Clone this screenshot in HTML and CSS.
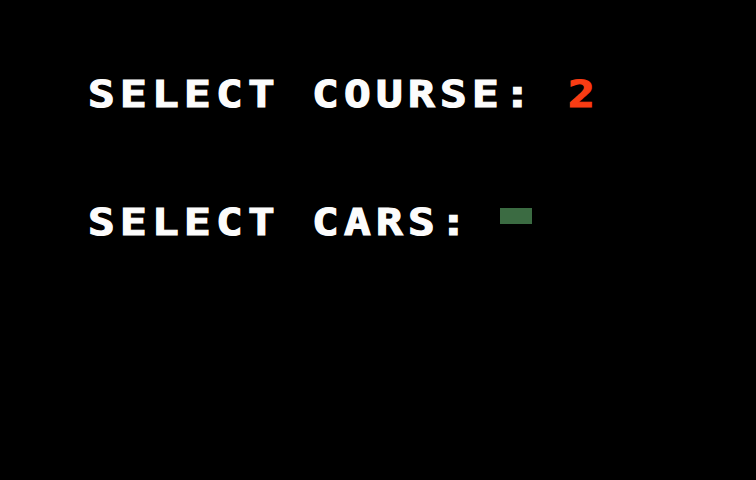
FILE: index.html
```html
<!DOCTYPE html>
<html lang="en">
<head>
    <meta charset="UTF-8">
    <meta name="viewport" content="width=device-width, initial-scale=1.0">
    <title>Select Course</title>
    <link rel="stylesheet" href="styles.css">
</head>
<body>
    <div class="menu">
        <div class="row">
            <span class="label">SELECT COURSE: <span class="value">2</span></span>
        </div>
        <div class="row">
            <span class="label">SELECT CARS:</span>
            <span class="car-box"></span>
        </div>
    </div>
</body>
</html>
```

FILE: styles.css
```css
body {
    margin: 0;
    background-color: #000;
    color: #fcfcfc;
    font-family: "DejaVu Sans Mono", monospace;
    font-weight: bold;
}

.menu {
    width: 756px;
    height: 480px;
    padding: 76px 0 0 88px;
    box-sizing: border-box;
    display: flex;
    flex-direction: column;
    gap: 91px;
}

.row {
    display: flex;
    align-items: flex-start;
    height: 37px;
}

/* glyphs stretched and thickened a little to get the wide blocky look */
.label {
    display: inline-block;
    font-size: 37px;
    line-height: 37px;
    letter-spacing: 4.39px;
    white-space: pre;
    -webkit-text-stroke: 1.2px currentColor;
    transform: scaleX(1.2);
    transform-origin: left top;
}

.value {
    color: #f83c14;
}

/* little green block standing in for the car count */
.car-box {
    width: 32px;
    height: 16px;
    margin: 4px 0 0 92px;
    background-color: #3b6b42;
}
```
